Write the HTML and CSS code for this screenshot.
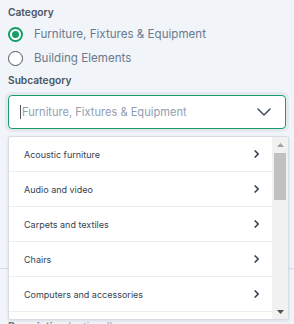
FILE: index.html
```html
<!DOCTYPE html>
<html>
<head>
<meta charset="utf-8">
<link rel="stylesheet" href="styles.css">
</head>
<body>
<div class="form">
  <div class="label">Category</div>
  <div class="radio-row first"><span class="radio checked"></span><span class="radio-text">Furniture, Fixtures &amp; Equipment</span></div>
  <div class="radio-row"><span class="radio"></span><span class="radio-text">Building Elements</span></div>
  <div class="label sub">Subcategory</div>
  <div class="field">
    <div class="select">
      <span class="caret"></span><span class="placeholder">Furniture, Fixtures &amp; Equipment</span>
      <svg class="chev-down" width="14" height="8" viewBox="0 0 14 8"><path d="M1 1l6 6 6-6" fill="none" stroke="#4b5563" stroke-width="1.6" stroke-linecap="round" stroke-linejoin="round"/></svg>
    </div>
    <div class="under">
      <div class="under-block"></div>
      <div class="under-line"></div>
      <div class="under-block2"></div>
      <div class="label desc">Description <span class="opt">(optional)</span></div>
    </div>
    <div class="menu">
      <div class="list">
        <div class="item"><span>Acoustic furniture</span><svg class="chev" width="6" height="8" viewBox="0 0 6 8"><path d="M1.2 1l3 3-3 3" fill="none" stroke="#374151" stroke-width="1.7" stroke-linecap="round" stroke-linejoin="round"/></svg></div>
        <div class="item"><span>Audio and video</span><svg class="chev" width="6" height="8" viewBox="0 0 6 8"><path d="M1.2 1l3 3-3 3" fill="none" stroke="#374151" stroke-width="1.7" stroke-linecap="round" stroke-linejoin="round"/></svg></div>
        <div class="item"><span>Carpets and textiles</span><svg class="chev" width="6" height="8" viewBox="0 0 6 8"><path d="M1.2 1l3 3-3 3" fill="none" stroke="#374151" stroke-width="1.7" stroke-linecap="round" stroke-linejoin="round"/></svg></div>
        <div class="item"><span>Chairs</span><svg class="chev" width="6" height="8" viewBox="0 0 6 8"><path d="M1.2 1l3 3-3 3" fill="none" stroke="#374151" stroke-width="1.7" stroke-linecap="round" stroke-linejoin="round"/></svg></div>
        <div class="item"><span>Computers and accessories</span><svg class="chev" width="6" height="8" viewBox="0 0 6 8"><path d="M1.2 1l3 3-3 3" fill="none" stroke="#374151" stroke-width="1.7" stroke-linecap="round" stroke-linejoin="round"/></svg></div>
        <div class="item"><span>Desks</span><svg class="chev" width="6" height="8" viewBox="0 0 6 8"><path d="M1.2 1l3 3-3 3" fill="none" stroke="#374151" stroke-width="1.7" stroke-linecap="round" stroke-linejoin="round"/></svg></div>
      </div>
      <div class="scrollbar">
        <div class="sb-btn"><svg width="7" height="4" viewBox="0 0 7 4"><path d="M0 4L3.5 0 7 4z" fill="#a3a3a3"/></svg></div>
        <div class="sb-track">
          <div class="sb-thumb"></div>
        </div>
        <div class="sb-btn"><svg width="7" height="4" viewBox="0 0 7 4"><path d="M0 0h7L3.5 4z" fill="#505050"/></svg></div>
      </div>
    </div>
  </div>
</div>
</body>
</html>
```
FILE: styles.css
```css
html, body {
  margin: 0;
  padding: 0;
}
body {
  background: #f1f4f8;
  font-family: Inter, "Noto Sans", sans-serif;
  width: 294px;
  height: 324px;
  overflow: hidden;
}
.form {
  padding: 4px 8px 0 8px;
  display: flex;
  flex-direction: column;
}
.label {
  font-size: 10.2px;
  line-height: 16px;
  font-weight: 600;
  color: #4b5563;
}
.label.sub {
  margin-top: 2px;
}
.radio-row {
  height: 24px;
  display: flex;
  align-items: center;
  gap: 11px;
}
.radio-row.first {
  margin-top: 2px;
}
.radio {
  width: 15px;
  height: 15px;
  box-sizing: border-box;
  border-radius: 50%;
  border: 1.6px solid #4b5563;
  background: #fff;
  flex: none;
  position: relative;
}
.radio.checked {
  border: 2px solid #1a9c69;
}
.radio.checked::after {
  content: "";
  position: absolute;
  left: 2px;
  top: 2px;
  width: 7px;
  height: 7px;
  border-radius: 50%;
  background: #1a9c69;
}
.radio-text {
  font-size: 11.6px;
  color: #6b7a8f;
}
.field {
  position: relative;
  margin-top: 7px;
}
.select {
  height: 34px;
  box-sizing: border-box;
  border: 1.5px solid #1a9c69;
  border-radius: 4px;
  background: #fff;
  box-shadow: 0 0 0 3px #e4e9f0;
  display: flex;
  align-items: center;
  padding: 0 14px 0 11px;
}
.caret {
  width: 1px;
  height: 14px;
  background: #4b5563;
  margin-right: 1px;
}
.placeholder {
  font-size: 11.1px;
  color: #929eb0;
  flex: 1;
}
.chev-down {
  flex: none;
}
.under {
  display: flex;
  flex-direction: column;
}
.under-block {
  height: 139px;
}
.under-line {
  height: 1px;
  background: #d3d9e1;
  margin-left: -8px;
  margin-right: -8px;
}
.under-block2 {
  height: 49px;
}
.desc {
  color: #6b7280;
}
.opt {
  font-weight: 400;
  color: #9ca3af;
}
.menu {
  position: absolute;
  left: 0;
  top: 41px;
  width: 281px;
  height: 184px;
  box-sizing: border-box;
  border: 1px solid #d7dde5;
  border-radius: 2px;
  background: #fff;
  box-shadow: 0 1px 3px rgba(60, 70, 90, 0.12);
  display: flex;
  overflow: hidden;
}
.list {
  flex: 1;
  overflow: hidden;
}
.item {
  height: 35px;
  box-sizing: border-box;
  border-bottom: 1px solid #e9eef4;
  display: flex;
  align-items: center;
  justify-content: space-between;
  padding: 0 12px 0 15px;
  font-size: 9px;
  color: #374151;
}
.chev {
  flex: none;
}
.scrollbar {
  width: 16px;
  flex: none;
  background: #f1f1f1;
  display: flex;
  flex-direction: column;
}
.sb-btn {
  height: 15px;
  display: flex;
  align-items: center;
  justify-content: center;
  flex: none;
}
.sb-track {
  flex: 1;
  padding: 1px 2px 0 2px;
}
.sb-thumb {
  height: 47px;
  background: #c1c1c1;
}
```
